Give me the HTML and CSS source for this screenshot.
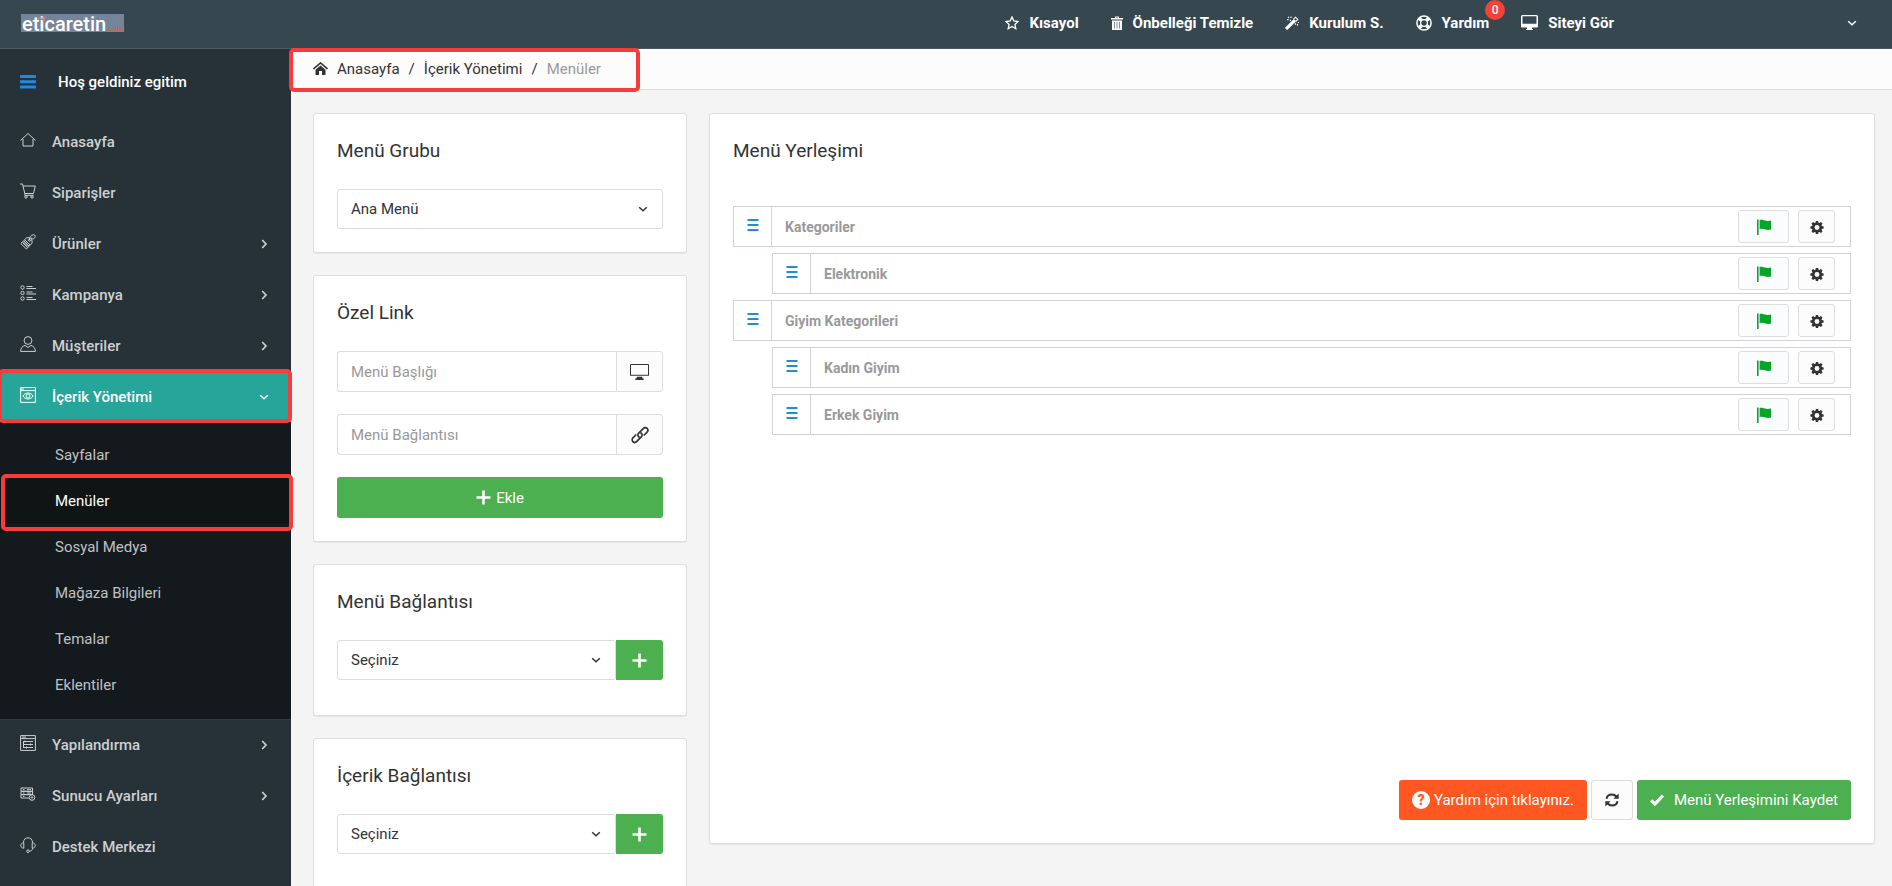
FILE: index.html
```html
<!DOCTYPE html>
<html lang="tr">
<head>
<meta charset="utf-8">
<title>Menüler - İçerik Yönetimi</title>
<link rel="stylesheet" href="styles.css">
</head>
<body>
<svg class="sprite" aria-hidden="true">
  <symbol id="chev-down" viewBox="0 0 10 10"><path d="M1.2 3.2 5 6.8l3.800-3.600" fill="none" stroke="currentColor" stroke-width="1.500"/></symbol>
  <symbol id="chev-right" viewBox="0 0 10 10"><path d="M3.200 1 7 5 3.200 9" fill="none" stroke="currentColor" stroke-width="1.700"/></symbol>
  <symbol id="plus" viewBox="0 0 15 15"><path d="M7.500.5v14M.5 7.500h14" stroke="currentColor" stroke-width="2.600"/></symbol>
  <symbol id="lines" viewBox="0 0 12 12"><path d="M.5 1h11M.5 6h11M.5 11h11" stroke="currentColor" stroke-width="2"/></symbol>
  <symbol id="flag" viewBox="0 0 16 16"><path d="M1 .5h1.600V16H1zM3.600 1c2-.8 4 .2 5.600.6 1.600.5 3.800.4 5.800 0v9c-2 .6-4 .5-5.600 0-1.600-.5-3.800-1.300-5.800-.4z" fill="currentColor"/></symbol>
  <symbol id="gear" viewBox="0 0 16 16"><path fill="currentColor" fill-rule="evenodd" d="M6.700 1h2.600l.4 2 1.100.5 1.700-1.200 1.800 1.800-1.100 1.800.4 1 2 .4v2.400l-2 .5-.4 1 1.100 1.800-1.800 1.800-1.700-1.200-1.100.5-.4 2H6.700l-.4-2-1.100-.5-1.700 1.200L1.700 13l1.100-1.800-.4-1-2-.5V7.300l2-.4.4-1L1.700 4.100l1.800-1.800 1.700 1.200L6.300 3zM8 5.700a2.800 2.800 0 1 0 0 5.600 2.800 2.800 0 0 0 0-5.600z"/></symbol>
</svg>

<header class="topbar">
  <a class="logo" href="#">eticaretin<small>.com</small><i>my</i></a>
  <nav class="topnav">
    <a href="#"><svg width="14" height="14" viewBox="0 0 14 14"><path d="m7 1 1.800 4 4.300.5-3.200 2.900.9 4.300L7 10.500l-3.800 2.200.9-4.300L.9 5.500 5.200 5z" fill="none" stroke="currentColor" stroke-width="1.300"/></svg>Kısayol</a>
    <a href="#"><svg width="12" height="14" viewBox="0 0 12 14"><path d="M0 2h4V.6h4V2h4v1.600H0zM5 1.400V2h2v-.6zM1 4.400h10V14H1zM3.200 6v6.400h.6V6zm2.500 0v6.400h.6V6zM8.200 6v6.400h.6V6z" fill="currentColor" fill-rule="evenodd"/></svg>Önbelleği Temizle</a>
    <a href="#"><svg width="14" height="14" viewBox="0 0 14 14"><path d="m1 13 9-8.800" stroke="currentColor" stroke-width="3.200"/><path d="m8.500 3.200 2-2 2.300 2.200-2 2M3 .8l1 1M2 3.600h1.600M6 .5v1.600M5 4l1 .8M12.500 8v1.800M10 7.500l1 1M13.900 6.500h-1" fill="none" stroke="currentColor" stroke-width="1.100"/></svg>Kurulum S.</a>
    <a class="has-badge" href="#"><svg width="16" height="16" viewBox="0 0 16 16"><circle cx="8" cy="8" r="7.100" fill="none" stroke="currentColor" stroke-width="1.500"/><circle cx="8" cy="8" r="3.400" fill="none" stroke="currentColor" stroke-width="1.200"/><path d="m3.200 3.200 2.600 2.600M12.800 3.200l-2.600 2.600M12.800 12.800l-2.600-2.600M3.200 12.800l2.600-2.600" stroke="currentColor" stroke-width="3.600"/></svg>Yardım<span class="badge">0</span></a>
    <a href="#"><svg width="17" height="15" viewBox="0 0 17 15"><path d="M1.500 0h14A1.500 1.500 0 0 1 17 1.500v10a1 1 0 0 1-1 1h-5V14H12v1H5v-1h1v-1.500H1a1 1 0 0 1-1-1v-10A1.500 1.500 0 0 1 1.500 0zm0 1.200v7.600h14V1.200z" fill="currentColor" fill-rule="evenodd"/></svg>Siteyi Gör</a>
  </nav>
  <button class="user-menu" aria-label="Kullanıcı menüsü"><svg width="10" height="10"><use href="#chev-down"/></svg></button>
</header>

<div class="layout">
  <aside class="sidebar">
    <div class="welcome"><svg width="16" height="14" viewBox="0 0 16 14"><path d="M1 1.500h14M1 6.800h14M1 12.100h14" stroke="currentColor" stroke-width="3" stroke-linecap="round"/></svg>Hoş geldiniz egitim</div>
    <ul class="menu">
      <li><a class="item" href="#"><svg class="ico" viewBox="0 0 16 16"><path d="M.5 8.500 8 1.500l7.500 7M3 7v7h10V7"/></svg>Anasayfa</a></li>
      <li><a class="item" href="#"><svg class="ico" viewBox="0 0 16 16"><path d="M0 1h2.500l2.300 9.500h8.700l1.800-7.500H3.200M4.800 10.500v1.800h8.700"/><circle cx="6" cy="14" r="1.200"/><circle cx="12" cy="14" r="1.200"/></svg>Siparişler</a></li>
      <li><a class="item" href="#"><svg class="ico" viewBox="0 0 16 16"><path d="m.8 9.500 6-5.800 4.800.5.600 4.800-5.800 6zM2.500 8.500l5 5M4 7l5 5M3.200 7.700l5 5M5 6l5 5"/><circle cx="9.500" cy="6.300" r="1"/><path d="M9.500 6.300C9 3 11 .8 13.500.8c2.200 0 2.200 2.500.5 3.700C13 5.300 12 5 12 3.800"/></svg>Ürünler<svg class="arrow"><use href="#chev-right"/></svg></a></li>
      <li><a class="item" href="#"><svg class="ico" viewBox="0 0 16 16"><circle cx="2.500" cy="2.500" r="1.700"/><circle cx="2.500" cy="8" r="1.700"/><circle cx="2.500" cy="13.500" r="1.700"/><path d="M6.500 1.500h6M6.500 3.500H16M6.500 7h6M6.500 9H16M6.500 12.500h6M6.500 14.500H16"/></svg>Kampanya<svg class="arrow"><use href="#chev-right"/></svg></a></li>
      <li><a class="item" href="#"><svg class="ico" viewBox="0 0 16 16"><circle cx="8" cy="4.500" r="3.900"/><path d="M.6 15.400c0-3 1.800-5.400 4.400-6L8 11.500l3-2.100c2.600.6 4.400 3 4.400 6z"/></svg>Müşteriler<svg class="arrow"><use href="#chev-right"/></svg></a></li>
      <li class="marked">
        <a class="item active" href="#"><svg class="ico" viewBox="0 0 16 16"><path d="M.6.6h14.800v14.800H.6zM.6 3.600h14.800M1 2h3M3 9c2-4 8-4 10 0-2 4-8 4-10 0z"/><circle cx="8" cy="9" r="2"/></svg>İçerik Yönetimi<svg class="arrow"><use href="#chev-down"/></svg></a>
      </li>
    </ul>
    <ul class="submenu">
      <li><a href="#">Sayfalar</a></li>
      <li class="marked"><a class="current" href="#">Menüler</a></li>
      <li><a href="#">Sosyal Medya</a></li>
      <li><a href="#">Mağaza Bilgileri</a></li>
      <li><a href="#">Temalar</a></li>
      <li><a href="#">Eklentiler</a></li>
    </ul>
    <ul class="menu">
      <li><a class="item" href="#"><svg class="ico" viewBox="0 0 16 16"><path d="M.6.6h14.800v14.800H.6zM.6 3.600h14.800M2 2.100h4M3 6.500h10M3 9.500h10M3 12.500h10M5 5.500v2M10.500 8.500v2M6.500 11.500v2M3.500 6v7"/></svg>Yapılandırma<svg class="arrow"><use href="#chev-right"/></svg></a></li>
      <li><a class="item" href="#"><svg class="ico" viewBox="0 0 16 16"><path d="M1 2h11.500v3.300H1zM1 5.300h11.500v3.300H1zM9 12H1V8.600h8M3 3.700h1.500M7 3.700h4M3 7h1.500M7 7h4M3 10.300h1.500"/><circle cx="12" cy="11.500" r="2.800"/><circle cx="12" cy="11.500" r=".8"/></svg>Sunucu Ayarları<svg class="arrow"><use href="#chev-right"/></svg></a></li>
      <li><a class="item" href="#"><svg class="ico" viewBox="0 0 16 16"><path d="M3.500 5.500C3.500 2.500 5.500.8 8 .8s4.500 1.700 4.500 4.700M3.800 5.800c-4 0-4 5.400 0 5.400zM12.200 5.800c4 0 4 5.400 0 5.400zM12.500 11.200c0 2-1.300 3-3 3"/><circle cx="8" cy="14.200" r="1.300"/></svg>Destek Merkezi</a></li>
    </ul>
  </aside>

  <main class="content">
    <div class="crumbs">
      <nav class="trail" aria-label="Konum">
        <svg width="15" height="13" viewBox="0 0 15 13"><path d="M.5 7 7.500 1l7 6" fill="none" stroke="currentColor" stroke-width="1.600"/><path d="M2.500 7.800 7.500 3.600l5 4.200V13H9V9H6v4H2.500z" fill="currentColor"/></svg>
        <a href="#">Anasayfa</a><span>/</span><a href="#">İçerik Yönetimi</a><span>/</span><span class="here">Menüler</span>
      </nav>
    </div>

    <div class="columns">
      <div class="side">
        <section class="card">
          <h2><label for="group">Menü Grubu</label></h2>
          <div class="select"><select id="group"><option>Ana Menü</option></select><svg><use href="#chev-down"/></svg></div>
        </section>

        <form class="card form">
          <h2>Özel Link</h2>
          <div class="field"><input type="text" placeholder="Menü Başlığı" aria-label="Menü Başlığı"><span class="addon"><svg width="19" height="16" viewBox="0 0 19 16"><path d="M.5.5h18v11H.5z" fill="none" stroke="currentColor"/><path d="M1 11h17" stroke="#999"/><path d="M7 12.800h5l.7 1.700h1V16H5.300v-1.500h1z" fill="currentColor"/></svg></span></div>
          <div class="field"><input type="text" placeholder="Menü Bağlantısı" aria-label="Menü Bağlantısı"><span class="addon"><svg width="18" height="18" viewBox="0 0 18 18"><g fill="none" stroke="currentColor" stroke-width="1.700" stroke-linecap="round"><path d="M8.100 11c-1.500-1-1.500-2.800-.4-3.900l4.500-4.500c1.100-1.100 2.800-1.300 3.900-.2s.9 2.800-.2 3.900l-2.700 2.700"/><path d="M9.900 7c1.500 1 1.500 2.800.4 3.900l-4.500 4.500c-1.100 1.100-2.800 1.300-3.900.2s-.9-2.800.2-3.900l2.700-2.700"/></g></svg></span></div>
          <button class="btn green" type="button"><svg width="15" height="15"><use href="#plus"/></svg>Ekle</button>
        </form>

        <section class="card tall">
          <h2><label for="menu-link">Menü Bağlantısı</label></h2>
          <div class="field"><div class="select"><select id="menu-link"><option>Seçiniz</option></select><svg><use href="#chev-down"/></svg></div><button class="add" aria-label="Ekle"><svg width="15" height="15"><use href="#plus"/></svg></button></div>
        </section>

        <section class="card tall">
          <h2><label for="content-link">İçerik Bağlantısı</label></h2>
          <div class="field"><div class="select"><select id="content-link"><option>Seçiniz</option></select><svg><use href="#chev-down"/></svg></div><button class="add" aria-label="Ekle"><svg width="15" height="15"><use href="#plus"/></svg></button></div>
        </section>
      </div>

      <section class="card board">
        <h2>Menü Yerleşimi</h2>
        <ul class="tree">
          <li><span class="grip"><svg><use href="#lines"/></svg></span><span class="name">Kategoriler</span><button class="mini flag" aria-label="Dil"><svg><use href="#flag"/></svg></button><button class="mini" aria-label="Ayarlar"><svg><use href="#gear"/></svg></button></li>
          <li class="child"><span class="grip"><svg><use href="#lines"/></svg></span><span class="name">Elektronik</span><button class="mini flag" aria-label="Dil"><svg><use href="#flag"/></svg></button><button class="mini" aria-label="Ayarlar"><svg><use href="#gear"/></svg></button></li>
          <li><span class="grip"><svg><use href="#lines"/></svg></span><span class="name">Giyim Kategorileri</span><button class="mini flag" aria-label="Dil"><svg><use href="#flag"/></svg></button><button class="mini" aria-label="Ayarlar"><svg><use href="#gear"/></svg></button></li>
          <li class="child"><span class="grip"><svg><use href="#lines"/></svg></span><span class="name">Kadın Giyim</span><button class="mini flag" aria-label="Dil"><svg><use href="#flag"/></svg></button><button class="mini" aria-label="Ayarlar"><svg><use href="#gear"/></svg></button></li>
          <li class="child"><span class="grip"><svg><use href="#lines"/></svg></span><span class="name">Erkek Giyim</span><button class="mini flag" aria-label="Dil"><svg><use href="#flag"/></svg></button><button class="mini" aria-label="Ayarlar"><svg><use href="#gear"/></svg></button></li>
        </ul>
        <div class="actions">
          <button class="btn orange"><span class="q">?</span>Yardım için tıklayınız.</button>
          <button class="btn plain" aria-label="Yenile"><svg width="14" height="14" viewBox="0 0 14 14"><path d="M1.500 5.800C2 3.300 4.200 1.500 7 1.500c1.800 0 3.300.8 4.300 2M12.500 8.200c-.5 2.500-2.700 4.300-5.500 4.300-1.800 0-3.300-.8-4.300-2" fill="none" stroke="currentColor" stroke-width="2"/><path d="M13.700.5v5.300H8.400zM.3 13.500V8.200h5.300z" fill="currentColor"/></svg></button>
          <button class="btn green save"><svg width="14" height="12" viewBox="0 0 14 12"><path d="m1.200 6.300 3.700 3.700 8-8.500" fill="none" stroke="currentColor" stroke-width="3.200"/></svg>Menü Yerleşimini Kaydet</button>
        </div>
      </section>
    </div>
  </main>
</div>
</body>
</html>
```
FILE: styles.css
```css
* { box-sizing: border-box; }

html, body { height: 100%; }

body {
  margin: 0;
  display: flex;
  flex-direction: column;
  overflow: hidden;
  background: #f4f4f4;
  color: #333;
  font: 400 15px/22px Roboto, sans-serif;
}

a { color: inherit; text-decoration: none; }
ul { list-style: none; margin: 0; padding: 0; }
button, input, select { font: inherit; color: inherit; }
button { cursor: pointer; }
svg { flex: none; display: block; }

.sprite { position: absolute; width: 0; height: 0; }

/* top bar */
.topbar {
  flex: none;
  display: flex;
  align-items: flex-start;
  height: 49px;
  padding-left: 21px;
  background: #37474f;
  border-bottom: 1px solid #4b5a61;
  color: #fff;
}

.logo {
  position: relative;
  margin: 14px auto 0 0;
  width: 103px;
  height: 18px;
  padding-left: 1px;
  background: #75849b;
  font-size: 20px;
  font-weight: 500;
  line-height: 20px;
  white-space: nowrap;
}
.logo small { color: #e8562a; font-size: 8px; font-weight: 400; }
.logo i { position: absolute; left: 16px; top: 1px; color: #f08050; font-size: 6px; line-height: 6px; font-style: normal; }

.topnav { display: flex; }
.topnav a {
  display: flex;
  align-items: center;
  gap: 10px;
  padding: 0 16px;
  height: 45px;
  font-weight: 700;
}
.has-badge { position: relative; }
.badge {
  position: absolute;
  top: 0;
  right: 0;
  width: 20px;
  height: 20px;
  border-radius: 10px;
  background: #f44336;
  font-size: 12px;
  line-height: 20px;
  font-weight: 500;
  text-align: center;
}

.user-menu {
  display: flex;
  align-items: center;
  justify-content: flex-end;
  width: 262px;
  height: 45px;
  padding: 0 35px 0 0;
  border: 0;
  background: none;
  color: #fff;
}

.layout { flex: 1; min-height: 0; display: flex; }

/* sidebar */
.sidebar { flex: none; width: 291px; background: #263238; color: #cdd0d1; }

.welcome {
  display: flex;
  align-items: center;
  gap: 22px;
  padding: 22px 20px 24px;
  color: #fff;
  font-weight: 500;
}
.welcome svg { color: #1e88e5; }

.menu { display: flex; flex-direction: column; gap: 1px; }
.item {
  display: flex;
  align-items: center;
  gap: 16px;
  height: 50px;
  padding: 0 22px 0 20px;
  font-weight: 500;
}
.item.active { background: #26a69a; color: #fff; }
.ico { width: 16px; height: 16px; margin-bottom: 4px; fill: none; stroke: currentColor; stroke-width: 1; }
.arrow { width: 10px; height: 10px; margin-left: auto; }

.submenu {
  padding: 10px 0 11px;
  background: #14191d;
  border-bottom: 1px solid #2f3d44;
}
.submenu a { display: block; padding: 12px 20px 12px 55px; color: #bfc1c2; }
.submenu .current { background: #101415; color: #fff; }

/* red outlines laid over the highlighted places */
.marked, .trail { position: relative; }
.marked::after, .trail::after {
  content: "";
  position: absolute;
  inset: -3px -1px -1px -2px;
  border: 4px solid #f83b3b;
  border-radius: 5px;
  pointer-events: none;
}
.submenu .marked::after { inset: -4px -2px -7px 1px; }
.trail::after { inset: -1px -39px -3px -24px; }

/* content */
.content { flex: 1; min-width: 0; }

.crumbs {
  display: flex;
  height: 41px;
  padding-left: 22px;
  background: #fcfcfc;
  border-bottom: 1px solid #ddd;
}
.trail { display: flex; gap: 9px; padding: 9px 0; }
.trail svg { margin-top: 4px; }
.here { color: #999; }

.columns { display: flex; align-items: flex-start; gap: 22px; padding: 23px 17px 0 22px; }
.side { flex: none; width: 374px; display: flex; flex-direction: column; gap: 22px; }

.card {
  padding: 23px;
  background: #fff;
  border: 1px solid #ddd;
  border-radius: 3px;
  box-shadow: 0 1px 1px rgba(0, 0, 0, .06);
}
.card.tall { padding-bottom: 35px; }
.card h2 { margin: 0 0 24px; font-size: 19px; line-height: 28px; font-weight: 400; }

.form { display: flex; flex-direction: column; gap: 22px; }
.form h2 { margin-bottom: 2px; }
.form .btn, .form .field { height: 41px; }

.field { display: flex; }
.field input {
  flex: 1;
  min-width: 0;
  padding: 0 13px;
  border: 1px solid #ddd;
  border-right: 0;
  border-radius: 3px 0 0 3px;
  background: #fff;
}
.field input::placeholder { color: #999; opacity: 1; }
.addon {
  display: flex;
  align-items: center;
  justify-content: center;
  width: 47px;
  border: 1px solid #ddd;
  border-radius: 0 3px 3px 0;
  background: #fcfcfc;
}

.select { position: relative; flex: 1; }
.select select {
  display: block;
  width: 100%;
  height: 40px;
  padding: 0 13px;
  border: 1px solid #ddd;
  border-radius: 3px;
  background: #fff;
  appearance: none;
}
.select svg { position: absolute; right: 15px; top: 15px; width: 10px; height: 10px; pointer-events: none; }

.add {
  display: flex;
  align-items: center;
  justify-content: center;
  width: 47px;
  padding: 0;
  border: 0;
  border-radius: 0 3px 3px 0;
  background: #4caf50;
  color: #fff;
}

.btn {
  display: flex;
  align-items: center;
  justify-content: center;
  gap: 5px;
  height: 40px;
  padding: 0 13px;
  border: 0;
  border-radius: 3px;
  color: #fff;
}
.green { background: #4caf50; }
.orange { background: #ff5722; gap: 4px; }
.plain { border: 1px solid #ddd; background: #fcfcfc; color: #333; }
.save { gap: 10px; }
.q {
  width: 18px;
  height: 18px;
  border-radius: 9px;
  background: #fff;
  color: #ff5722;
  font-size: 14px;
  line-height: 18px;
  font-weight: 900;
}

/* menu tree */
.board { flex: 1; }
.tree { display: flex; flex-direction: column; gap: 6px; min-height: 550px; padding-top: 17px; }
.tree li {
  display: flex;
  align-items: center;
  height: 41px;
  padding-right: 15px;
  border: 1px solid #d0d3d9;
}
.tree .child { margin-left: 39px; }
.grip {
  display: flex;
  justify-content: center;
  align-self: stretch;
  width: 38px;
  padding-top: 12px;
  border-right: 1px solid #d0d3d9;
  color: #1e90d2;
}
.grip svg { width: 12px; height: 12px; }
.name { flex: 1; padding-left: 13px; color: #999; font-size: 14px; font-weight: 700; }
.mini {
  display: flex;
  align-items: center;
  justify-content: center;
  width: 37px;
  height: 33px;
  margin-left: 9px;
  padding: 0;
  border: 1px solid #ddd;
  border-radius: 3px;
  background: #fcfcfc;
}
.mini svg { width: 14px; height: 14px; }
.mini.flag { width: 51px; background: #fbfcfe; color: #06a528; }
.mini.flag svg { width: 16px; height: 16px; }

.actions { display: flex; justify-content: flex-end; gap: 4px; padding-top: 41px; }
```
